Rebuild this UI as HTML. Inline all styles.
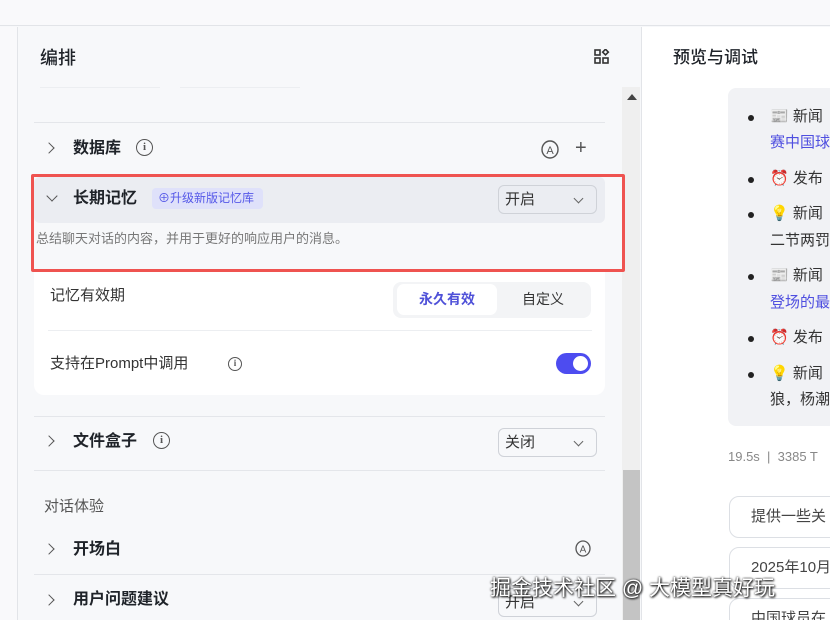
<!DOCTYPE html>
<html><head><meta charset="utf-8"><style>
*{margin:0;padding:0;box-sizing:border-box}
html,body{width:830px;height:620px;overflow:hidden}
body{background:#f7f8fa;font-family:"Liberation Sans","Noto Sans CJK SC",sans-serif;color:#1f2329;position:relative;line-height:1.2}
.a{position:absolute;white-space:nowrap}
.hl{position:absolute;height:1px;background:#e4e6ea}
.chev{position:absolute;width:8px;height:8px;border-right:1.5px solid #555;border-top:1.5px solid #555;transform:rotate(45deg)}
.info{position:absolute;width:17px;height:17px;border:1.5px solid #555;border-radius:50%;font:bold 11px "Liberation Serif",serif;text-align:center;line-height:14px;color:#555}
.sel{position:absolute;width:99px;height:29px;border:1px solid #cfd2d8;border-radius:6px;background:#f7f8fa;font-size:15px;padding-left:6px;line-height:27px;color:#333}
.sel:after{content:"";position:absolute;right:14px;top:9px;width:6px;height:6px;border-right:1.3px solid #666;border-bottom:1.3px solid #666;transform:rotate(45deg)}
.t{font-size:16px;font-weight:bold;color:#1f2329}
.li{position:absolute;left:752px;font-size:15px;color:#333;white-space:nowrap}
.li b{position:absolute;left:-4px;top:7px;width:6px;height:6px;background:#222;border-radius:50%}
.btn{position:absolute;left:729px;width:120px;height:42px;border:1px solid #dcdfe4;border-radius:10px;background:#fff;font-size:15px;padding-left:21px;line-height:40px;color:#444;white-space:nowrap}
</style></head><body>
<div class="a" style="left:0;top:0;width:830px;height:26px;background:#f9f9fb;border-bottom:1px solid #e2e4e8"></div>
<div class="a" style="left:0;top:27px;width:18px;height:593px;background:#f9f9fb;border-right:1px solid #e2e4e8"></div>
<div class="a" style="left:622px;top:87px;width:18px;height:533px;background:#efefef"></div>
<div class="a" style="left:627px;top:94px;width:0;height:0;border-left:5px solid transparent;border-right:5px solid transparent;border-bottom:6px solid #444"></div>
<div class="a" style="left:623px;top:470px;width:17px;height:150px;background:#c4c4c4"></div>
<div class="a" style="left:641px;top:27px;width:189px;height:593px;background:#fff;border-left:1px solid #e2e4e8"></div>

<div class="a" style="left:40px;top:48px;font-size:18px;font-weight:500">编排</div>
<svg class="a" style="left:594px;top:49px" width="16" height="16" viewBox="0 0 16 16" fill="none" stroke="#333" stroke-width="1.6"><rect x="1" y="1" width="5" height="5"/><rect x="1" y="9" width="5" height="5"/><rect x="9" y="9" width="5" height="5"/><rect x="9.2" y="1.2" width="4" height="4" transform="rotate(45 11.5 3.5)"/></svg>
<div class="hl" style="left:40px;top:87px;width:120px;background:#eceef1"></div>
<div class="hl" style="left:180px;top:87px;width:120px;background:#eceef1"></div>
<div class="hl" style="left:34px;top:122px;width:571px"></div>

<div class="chev" style="left:45px;top:144px"></div>
<div class="a t" style="left:73px;top:139px">数据库</div>
<div class="info" style="left:136px;top:139px">i</div>
<svg class="a" style="left:541px;top:140px" width="18" height="19"><ellipse cx="9" cy="9.5" rx="8" ry="8.5" fill="none" stroke="#555" stroke-width="1.4"/><text x="9" y="14" font-size="11" text-anchor="middle" fill="#555" font-family="Liberation Sans">A</text></svg>
<div class="a" style="left:575px;top:136px;font-size:20px;color:#555;font-weight:300">+</div>

<div class="a" style="left:34px;top:177px;width:571px;height:46px;background:#ebedf2;border-radius:6px"></div>
<div class="chev" style="left:48px;top:192px;transform:rotate(135deg)"></div>
<div class="a t" style="left:73px;top:189px">长期记忆</div>
<div class="a" style="left:152px;top:188px;width:111px;height:21px;background:#dfe1fa;border-radius:4px;color:#5558e8;font-size:12px;line-height:21px;padding-left:6px">⊕升级新版记忆库</div>
<div class="sel" style="left:498px;top:185px;background:#ebedf2">开启</div>
<div class="a" style="left:36px;top:231px;font-size:13px;color:#777">总结聊天对话的内容，并用于更好的响应用户的消息。</div>
<div class="a" style="left:31px;top:174px;width:594px;height:98px;border:3px solid #ef5350;border-radius:2px"></div>

<div class="a" style="left:34px;top:272px;width:571px;height:123px;background:#fff;border-radius:0 0 10px 10px"></div>
<div class="a" style="left:50px;top:287px;font-size:15px;color:#333">记忆有效期</div>
<div class="a" style="left:393px;top:282px;width:198px;height:36px;background:#f3f4f6;border-radius:8px"></div>
<div class="a" style="left:397px;top:284px;width:100px;height:31px;background:#fff;border-radius:7px;text-align:center;line-height:31px;color:#4e50d8;font-size:14px;font-weight:bold">永久有效</div>
<div class="a" style="left:522px;top:284px;line-height:31px;font-size:14px;color:#333">自定义</div>
<div class="hl" style="left:48px;top:330px;width:544px;background:#eceef1"></div>
<div class="a" style="left:50px;top:355px;font-size:15px;color:#333">支持在Prompt中调用</div>
<div class="info" style="left:228px;top:357px;width:14px;height:14px;font-size:9px;line-height:11px;border-width:1.2px">i</div>
<div class="a" style="left:556px;top:353px;width:35px;height:21px;background:#4d4cf0;border-radius:11px"></div>
<div class="a" style="left:573px;top:356px;width:15px;height:15px;background:#fff;border-radius:50%"></div>

<div class="hl" style="left:34px;top:416px;width:571px"></div>
<div class="chev" style="left:45px;top:437px"></div>
<div class="a t" style="left:73px;top:432px">文件盒子</div>
<div class="info" style="left:153px;top:432px">i</div>
<div class="sel" style="left:498px;top:428px">关闭</div>
<div class="hl" style="left:34px;top:470px;width:571px"></div>

<div class="a" style="left:44px;top:498px;font-size:15px;color:#555">对话体验</div>
<div class="chev" style="left:45px;top:545px"></div>
<div class="a t" style="left:73px;top:540px">开场白</div>
<svg class="a" style="left:575px;top:540px" width="16" height="17"><ellipse cx="8" cy="8.5" rx="7" ry="7.5" fill="none" stroke="#555" stroke-width="1.3"/><text x="8" y="12.5" font-size="10" text-anchor="middle" fill="#555" font-family="Liberation Sans">A</text></svg>
<div class="hl" style="left:34px;top:574px;width:571px"></div>
<div class="chev" style="left:45px;top:596px"></div>
<div class="a t" style="left:73px;top:590px">用户问题建议</div>
<div class="sel" style="left:498px;top:588px">开启</div>

<div class="a" style="left:673px;top:48px;font-size:17px;font-weight:500">预览与调试</div>
<div class="a" style="left:728px;top:88px;width:110px;height:338px;background:#f1f2f5;border-radius:8px"></div>
<div class="li" style="top:108px"><b></b><span style="margin-left:18px">📰 新闻</span></div>
<div class="a" style="left:770px;top:134px;font-size:15px;color:#4f4fe0">赛中国球</div>
<div class="li" style="top:170px"><b></b><span style="margin-left:18px">⏰ 发布</span></div>
<div class="li" style="top:205px"><b></b><span style="margin-left:18px">💡 新闻</span></div>
<div class="a" style="left:770px;top:232px;font-size:15px;color:#333">二节两罚</div>
<div class="li" style="top:267px"><b></b><span style="margin-left:18px">📰 新闻</span></div>
<div class="a" style="left:770px;top:294px;font-size:15px;color:#4f4fe0">登场的最</div>
<div class="li" style="top:329px"><b></b><span style="margin-left:18px">⏰ 发布</span></div>
<div class="li" style="top:365px"><b></b><span style="margin-left:18px">💡 新闻</span></div>
<div class="a" style="left:770px;top:391px;font-size:15px;color:#333">狼，杨潮</div>
<div class="a" style="left:728px;top:449px;font-size:13px;color:#888">19.5s &nbsp;|&nbsp; 3385 T</div>
<div class="btn" style="top:496px">提供一些关</div>
<div class="btn" style="top:547px">2025年10月</div>
<div class="btn" style="top:598px">中国球员在</div>

<div class="a" style="left:490px;top:576px;font-size:21px;color:#fff;text-shadow:0 0 2px #000,1px 1px 2px #000">掘金技术社区 @ 大模型真好玩</div>
</body></html>
